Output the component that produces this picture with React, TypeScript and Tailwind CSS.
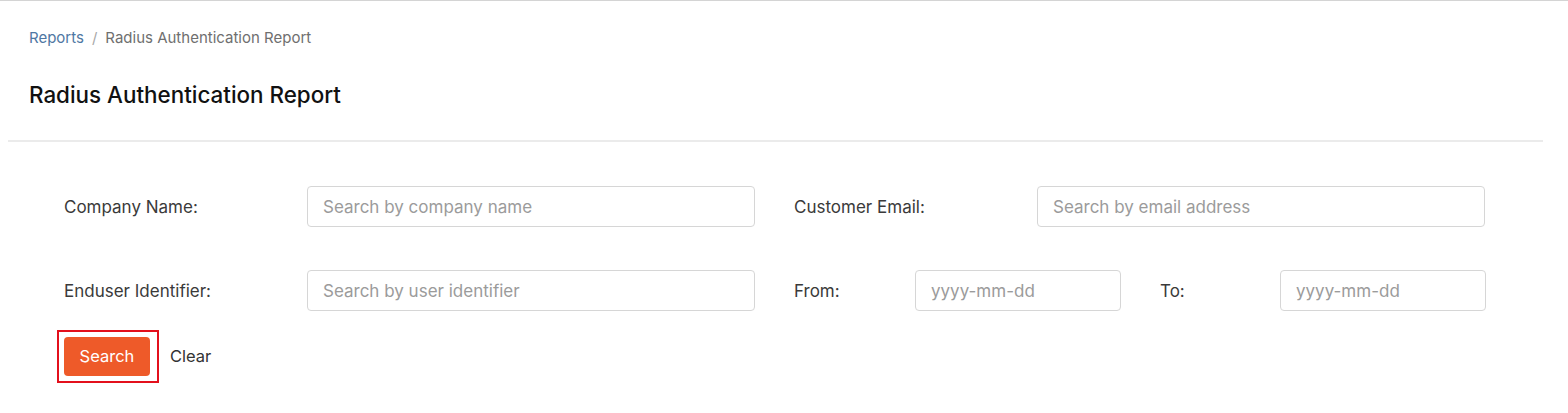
import React from "react";

const Field: React.FC<{ label: string; placeholder: string; labelW: string; inputW?: string }> = ({ label, placeholder, labelW, inputW }) => (
  <div className="flex items-center">
    <label className={`${labelW} shrink-0 text-[17px] leading-[24px] text-[#3a3a3a]`}>{label}</label>
    <input
      type="text"
      placeholder={placeholder}
      className={`${inputW ?? "flex-1"} h-[41px] rounded-[4px] border border-[#d6d6d6] bg-white px-[15px] text-[17px] text-[#333] placeholder:text-[#9b9b9b] outline-none`}
    />
  </div>
);

export default function App() {
  return (
    <div className="min-h-[413px] w-[1568px] border-t border-[#d4d4d4] bg-white font-['Inter',sans-serif]">
      <div className="px-[29px] pt-[27px]">
        <nav className="flex items-center text-[15px] leading-[20px] text-[#6f6f6f]">
          <a href="#" className="text-[#4f77a3]">Reports</a>
          <span className="mx-[8px] text-[#a8a8a8]">/</span>
          <span>Radius Authentication Report</span>
        </nav>
        <h1 className="mt-[33px] text-[22.4px] leading-[28px] font-medium text-[#111111]">Radius Authentication Report</h1>
      </div>
      <div className="ml-[8px] mt-[31px] h-[2px] w-[1535px] bg-[#ebebeb]" />

      <form className="px-[64px] pt-[44px]" onSubmit={(e) => e.preventDefault()}>
        <div className="grid w-[1421px] grid-cols-2 gap-x-[39px] gap-y-[43px]">
          <Field label="Company Name:" placeholder="Search by company name" labelW="w-[243px]" />
          <Field label="Customer Email:" placeholder="Search by email address" labelW="w-[243px]" />
          <Field label="Enduser Identifier:" placeholder="Search by user identifier" labelW="w-[243px]" />
          <div className="flex items-center">
            <Field label="From:" placeholder="yyyy-mm-dd" labelW="w-[121px]" inputW="w-[206px]" />
            <div className="ml-[39px]">
              <Field label="To:" placeholder="yyyy-mm-dd" labelW="w-[120px]" inputW="w-[206px]" />
            </div>
          </div>
        </div>

        <div className="mt-[19px] flex items-center">
          <div className="-ml-[7px] border-2 border-[#e3101c] py-[5px] pl-[5px] pr-[7px]">
            <button type="submit" className="block h-[39px] w-[86px] rounded-[4px] bg-[#ee5a29] text-[16.5px] text-white">
              Search
            </button>
          </div>
          <button type="button" className="ml-[11px] text-[16.5px] text-[#333333]">
            Clear
          </button>
        </div>
      </form>
    </div>
  );
}
